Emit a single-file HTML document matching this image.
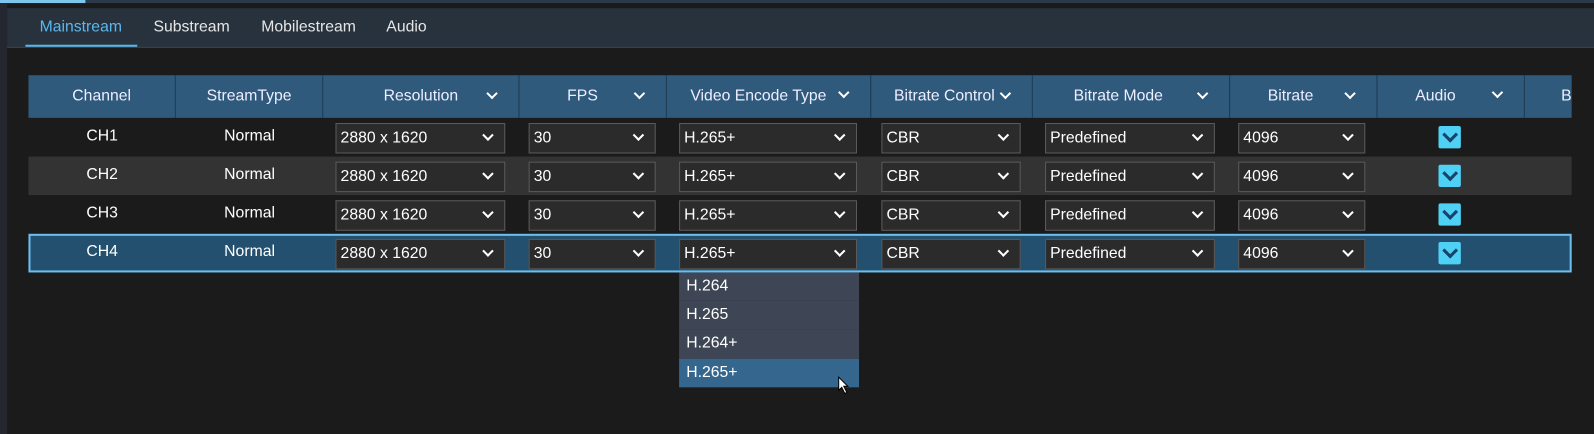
<!DOCTYPE html>
<html><head><style>
*{margin:0;padding:0;box-sizing:border-box}
body{width:1594px;height:427px;background:#1b1b1b;font-family:"Liberation Sans",sans-serif;color:#fff;position:relative;overflow:hidden}
#w{position:absolute;left:0;top:0;width:1568px;height:420px;transform:scale(1.0166);transform-origin:0 0}
.a{position:absolute}
.tab{position:absolute;top:18px;font-size:15.5px;color:#e6e6e6}
.hd{position:absolute;top:74px;height:42px;background:#2f5a7c;border-right:1px solid #1d3a52;font-size:15.5px;color:#eef;display:flex;align-items:center;justify-content:center}
.row{position:absolute;left:28px;width:1518px;height:38px}
.c{position:absolute;font-size:15.5px;text-align:center;width:145px}
.sel{position:absolute;height:30px;background:#2b2b2b;border:1px solid #5b5b5b;font-size:15.5px;padding-left:4px;line-height:28px}
.chev{position:absolute;width:8px;height:8px;border-right:2.5px solid #fff;border-bottom:2.5px solid #fff;transform:rotate(45deg)}
.cb{position:absolute;left:1415px;width:22px;height:22px;background:#4fd0f5;border-radius:2px}
.cb:after{content:"";position:absolute;left:6px;top:3px;width:8px;height:8px;border-right:3px solid #17436a;border-bottom:3px solid #17436a;transform:rotate(45deg)}
.it{position:absolute;left:668px;width:177px;height:28px;background:#3e4656;font-size:15.5px;padding-left:7px;line-height:28px}
</style></head><body>
<div id="w">
<div class="a" style="left:0;top:0;width:1568px;height:3px;background:#2a3a4a"></div>
<div class="a" style="left:0;top:0;width:84px;height:3px;background:#7fc6ee"></div>
<div class="a" style="left:0;top:3px;width:7px;height:424px;background:#24272f"></div>
<div class="a" style="left:7px;top:8px;width:1587px;height:39px;background:#27323d;border-bottom:1px solid #3a4654"></div>
<div class="tab" style="left:39px;color:#5ab8ef">Mainstream</div>
<div class="tab" style="left:151px">Substream</div>
<div class="tab" style="left:257px">Mobilestream</div>
<div class="tab" style="left:380px">Audio</div>
<div class="a" style="left:25px;top:44px;width:110px;height:2px;background:#5ab8ef"></div>

<div class="hd" style="left:28px;width:145px">Channel</div>
<div class="hd" style="left:173px;width:145px">StreamType</div>
<div class="hd" style="left:318px;width:193px">Resolution<i class="chev" style="left:162px;top:14px"></i></div>
<div class="hd" style="left:511px;width:145px"><span style="margin-right:20px">FPS</span><i class="chev" style="left:114px;top:14px"></i></div>
<div class="hd" style="left:656px;width:201px"><span style="margin-right:20px">Video Encode Type</span><i class="chev" style="left:170px;top:13px"></i></div>
<div class="hd" style="left:857px;width:159px"><span style="margin-right:14px">Bitrate Control</span><i class="chev" style="left:128px;top:14px"></i></div>
<div class="hd" style="left:1016px;width:194px"><span style="margin-right:25px">Bitrate Mode</span><i class="chev" style="left:163px;top:14px"></i></div>
<div class="hd" style="left:1210px;width:145px"><span style="margin-right:25px">Bitrate</span><i class="chev" style="left:114px;top:14px"></i></div>
<div class="hd" style="left:1355px;width:145px"><span style="margin-right:30px">Audio</span><i class="chev" style="left:114px;top:13px"></i></div>
<div class="hd" style="left:1500px;width:46px;justify-content:flex-end;border-right:none">B</div>

<div class="row" style="top:116px;background:#1b1b1b"></div>
<div class="row" style="top:154px;background:#333"></div>
<div class="row" style="top:192px;background:#1b1b1b"></div>
<div class="row" style="top:230px;background:#24506f;border:2px solid #6bbdf0"></div>

<div id="rows"></div>

<div class="it" style="top:268px">H.264</div>
<div class="it" style="top:296px">H.265</div>
<div class="it" style="top:324px;height:29px">H.264+</div>
<div class="it" style="top:353px;background:#35668e">H.265+</div>
<svg class="a" style="left:824px;top:370px" width="12" height="18" viewBox="0 0 12 18"><path d="M1 1 L1 14 L4 11 L7 17 L9 16 L6 10 L10 10 Z" fill="#fff" stroke="#000" stroke-width="1"/></svg>
</div>
<script>
var ys=[116,154,192,230],h='';
ys.forEach(function(y,i){
 h+='<div class="c" style="left:28px;top:'+(y+9)+'px">CH'+(i+1)+'</div>';
 h+='<div class="c" style="left:173px;top:'+(y+9)+'px">Normal</div>';
 var s=[[330,167,'2880 x 1620'],[520,125,'30'],[668,175,'H.265+'],[867,137,'CBR'],[1028,167,'Predefined'],[1218,125,'4096']];
 s.forEach(function(q){h+='<div class="sel" style="left:'+q[0]+'px;top:'+(y+5)+'px;width:'+q[1]+'px">'+q[2]+'<i class="chev" style="right:12px;top:7px"></i></div>';});
 h+='<div class="cb" style="top:'+(y+8)+'px"></div>';
});
document.getElementById('rows').innerHTML=h;
</script>
</body></html>
